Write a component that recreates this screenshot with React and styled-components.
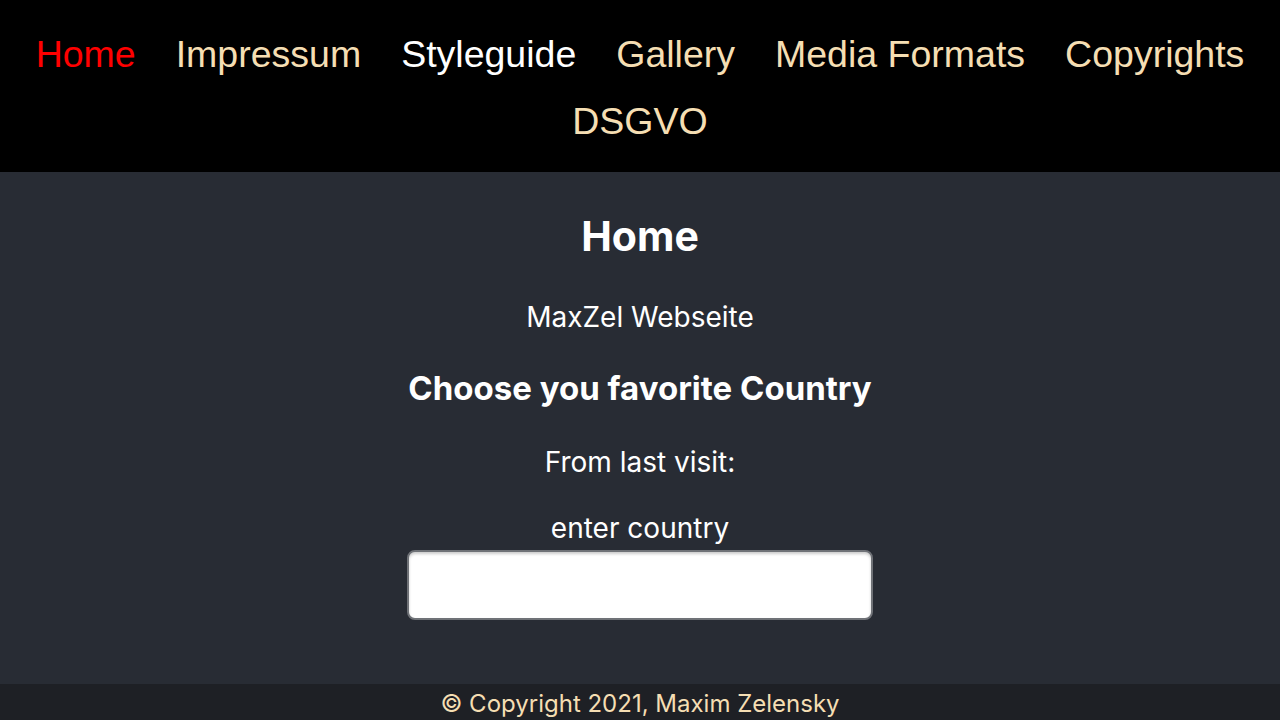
import React from 'react';
import styled, { createGlobalStyle } from 'styled-components';

const GlobalStyle = createGlobalStyle`
  html, body {
    margin: 0;
    padding: 0;
    background: #282c34;
  }
  * {
    box-sizing: border-box;
  }
`;

const Page = styled.div`
  min-height: 100vh;
  display: flex;
  flex-direction: column;
  font-family: Inter, "Noto Sans", sans-serif;
  color: #fff;
`;

const Nav = styled.nav`
  background: #000;
  padding: 33px 20px 30px;
  display: flex;
  flex-wrap: wrap;
  justify-content: center;
  column-gap: 40px;
  row-gap: 25px;
`;

const NavLink = styled.a`
  font-family: "Liberation Sans", Arial, sans-serif;
  font-size: 37.5px;
  line-height: 42px;
  text-decoration: none;
  color: ${p => (p.$active ? '#ff0000' : p.$hover ? '#ffffff' : '#f5deb3')};
  cursor: pointer;
`;

const Main = styled.main`
  flex: 1;
  display: flex;
  flex-direction: column;
  align-items: center;
  text-align: center;
  padding-top: 39px;
`;

const Title = styled.h2`
  margin: 0;
  font-size: 41px;
  line-height: 50px;
  font-weight: 700;
`;

const Subtitle = styled.p`
  margin: 41px 0 0;
  font-size: 28px;
  line-height: 31px;
`;

const Question = styled.h3`
  margin: 37px 0 0;
  font-size: 33px;
  line-height: 36px;
  font-weight: 700;
`;

const Text = styled.p`
  margin: ${p => p.$top}px 0 0;
  font-size: 28px;
  line-height: 32px;
`;

const CountryInput = styled.input`
  margin-top: 6px;
  width: 466px;
  height: 70px;
  border: 2px solid #6f7277;
  border-radius: 8px;
  background: #fff;
  box-shadow: inset 0 2px 3px rgba(0, 0, 0, 0.2);
  font-size: 24px;
  padding: 0 12px;
  outline: none;
`;

const Footer = styled.footer`
  margin-top: 63px;
  height: 36px;
  background: #1e2025;
  color: #f5deb3;
  text-align: center;
  font-size: 24px;
  line-height: 40px;
  overflow: hidden;
`;

const links = ['Home', 'Impressum', 'Styleguide', 'Gallery', 'Media Formats', 'Copyrights', 'DSGVO'];

export default function App() {
  return (
    <Page>
      <GlobalStyle />
      <Nav>
        {links.map(l => (
          <NavLink key={l} $active={l === 'Home'} $hover={l === 'Styleguide'}>
            {l}
          </NavLink>
        ))}
      </Nav>
      <Main>
        <Title>Home</Title>
        <Subtitle>MaxZel Webseite</Subtitle>
        <Question>Choose you favorite Country</Question>
        <Text $top={40}>From last visit:</Text>
        <Text $top={34}>enter country</Text>
        <CountryInput type="text" />
      </Main>
      <Footer>© Copyright 2021, Maxim Zelensky</Footer>
    </Page>
  );
}
